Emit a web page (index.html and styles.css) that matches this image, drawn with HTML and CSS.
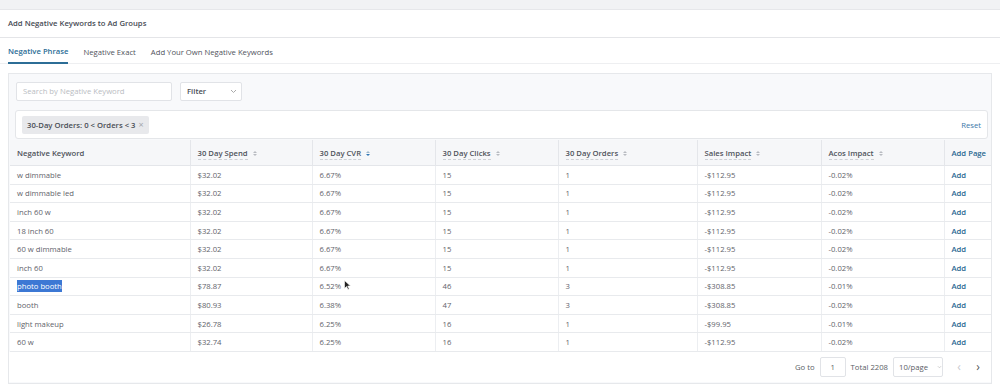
FILE: index.html
```html
<!DOCTYPE html>
<html lang="en">

<head>
    <meta charset="UTF-8">
    <title>Add Negative Keywords</title>
    <link rel="stylesheet" href="styles.css">
</head>

<body>
    <div class="topbar"></div>
    <div class="title">Add Negative Keywords to Ad Groups</div>
    <div class="tabs">
        <span class="tab active">Negative Phrase</span>
        <span class="tab">Negative Exact</span>
        <span class="tab">Add Your Own Negative Keywords</span>
    </div>

    <div class="panel">
        <div class="toolbar">
            <div class="search">Search by Negative Keyword</div>
            <div class="select">Filter
                <svg width="7" height="5" viewBox="0 0 7 5"><path d="M1 1l2.5 2.5L6 1" fill="none" stroke="#aaa" stroke-width="1"/></svg>
            </div>
        </div>
        <div class="chips">
            <span class="chip">30-Day Orders: 0 &lt; Orders &lt; 3 <span class="close">&times;</span></span>
            <span class="reset">Reset</span>
        </div>

        <table class="grid">
            <colgroup>
                <col style="width:180px">
                <col style="width:122px">
                <col style="width:123px">
                <col style="width:123px">
                <col style="width:139px">
                <col style="width:124px">
                <col style="width:123px">
                <col>
            </colgroup>
            <thead>
                <tr>
                    <th>Negative Keyword</th>
                    <th><span class="sort">30 Day Spend</span><i class="caret"><b></b><b></b></i></th>
                    <th><span class="sort">30 Day CVR</span><i class="caret down"><b></b><b></b></i></th>
                    <th><span class="sort">30 Day Clicks</span><i class="caret"><b></b><b></b></i></th>
                    <th><span class="sort">30 Day Orders</span><i class="caret"><b></b><b></b></i></th>
                    <th><span class="sort">Sales Impact</span><i class="caret"><b></b><b></b></i></th>
                    <th><span class="sort">Acos Impact</span><i class="caret"><b></b><b></b></i></th>
                    <th class="link">Add Page</th>
                </tr>
            </thead>
            <tbody>
                <tr><td>w dimmable</td><td>$32.02</td><td>6.67%</td><td>15</td><td>1</td><td>-$112.95</td><td>-0.02%</td><td class="link">Add</td></tr>
                <tr><td>w dimmable led</td><td>$32.02</td><td>6.67%</td><td>15</td><td>1</td><td>-$112.95</td><td>-0.02%</td><td class="link">Add</td></tr>
                <tr><td>inch 60 w</td><td>$32.02</td><td>6.67%</td><td>15</td><td>1</td><td>-$112.95</td><td>-0.02%</td><td class="link">Add</td></tr>
                <tr><td>18 inch 60</td><td>$32.02</td><td>6.67%</td><td>15</td><td>1</td><td>-$112.95</td><td>-0.02%</td><td class="link">Add</td></tr>
                <tr><td>60 w dimmable</td><td>$32.02</td><td>6.67%</td><td>15</td><td>1</td><td>-$112.95</td><td>-0.02%</td><td class="link">Add</td></tr>
                <tr><td>inch 60</td><td>$32.02</td><td>6.67%</td><td>15</td><td>1</td><td>-$112.95</td><td>-0.02%</td><td class="link">Add</td></tr>
                <tr><td><span class="selected">photo booth</span></td><td>$78.87</td><td class="has-cursor">6.52%<svg class="cursor" width="7" height="10" viewBox="0 0 7 10"><path d="M0.5 0.5v8l2-2 1.5 3 1.2-.6-1.5-2.9H6.5z" fill="#222" stroke="#fff" stroke-width="0.6"/></svg></td><td>46</td><td>3</td><td>-$308.85</td><td>-0.01%</td><td class="link">Add</td></tr>
                <tr><td>booth</td><td>$80.93</td><td>6.38%</td><td>47</td><td>3</td><td>-$308.85</td><td>-0.02%</td><td class="link">Add</td></tr>
                <tr><td>light makeup</td><td>$26.78</td><td>6.25%</td><td>16</td><td>1</td><td>-$99.95</td><td>-0.01%</td><td class="link">Add</td></tr>
                <tr><td>60 w</td><td>$32.74</td><td>6.25%</td><td>16</td><td>1</td><td>-$112.95</td><td>-0.02%</td><td class="link">Add</td></tr>
            </tbody>
        </table>

        <div class="pager">
            <span>Go to</span>
            <span class="box page-no">1</span>
            <span>Total 2208</span>
            <span class="box size">10/page
                <svg width="6" height="4" viewBox="0 0 6 4"><path d="M1 1l2 2 2-2" fill="none" stroke="#bbb" stroke-width="0.8"/></svg>
            </span>
            <span class="arrow muted">&#8249;</span>
            <span class="arrow">&#8250;</span>
        </div>
    </div>
</body>

</html>
```

FILE: styles.css
```css
body {
    margin: 0;
    background-color: #fff;
    font-family: "Open Sans", "Liberation Sans", sans-serif;
    font-size: 7.7px;
    color: #5a5e66;
}

.topbar {
    height: 9px;
    background-color: #f1f2f4;
    border-bottom: 1px solid #e6e7ea;
}

.title {
    height: 27px;
    line-height: 27px;
    padding-left: 8px;
    font-weight: 600;
    color: #484c55;
    border-bottom: 1px solid #e4e5e8;
}

.tabs {
    display: flex;
    gap: 15px;
    height: 25px;
    padding-left: 8px;
    border-bottom: 1px solid #eeeff1;
}

.tab {
    line-height: 29px;
    color: #50545c;
}

.tab.active {
    color: #2c6d96;
    font-weight: 600;
    border-bottom: 2px solid #2c6d96;
    margin-bottom: -1px;
    line-height: 27px;
}

.panel {
    margin: 9px 8px 0 8px;
    background-color: #f8f9fb;
    border: 1px solid #e6e8eb;
    height: 309px;
}

.toolbar {
    display: flex;
    gap: 8px;
    padding: 8px 7px 9px 7px;
}

.search,
.select {
    height: 17px;
    line-height: 17px;
    background-color: #fff;
    border: 1px solid #e1e3e7;
    border-radius: 2px;
}

.search {
    width: 148px;
    padding-left: 6px;
    color: #b9bcc2;
}

.select {
    width: 54px;
    padding: 0 0 0 6px;
    display: flex;
    align-items: center;
    gap: 24px;
    font-weight: 600;
    color: #4a4e56;
}

.chips {
    display: flex;
    align-items: center;
    justify-content: space-between;
    margin: 0 3px 1px 6px;
    height: 27px;
    padding: 0 6px 0 6px;
    background-color: #fff;
    border: 1px solid #e4e6e9;
    border-radius: 3px;
}

.chip {
    height: 18px;
    line-height: 18px;
    padding: 0 5px;
    background-color: #e8e9ec;
    border-radius: 2px;
    font-weight: 600;
    color: #4a4e56;
}

.chip .close {
    color: #a4a7ad;
    font-weight: 400;
    font-size: 9px;
    margin-left: 1px;
}

.reset {
    color: #3d78a8;
}

.grid {
    width: calc(100% - 1px);
    margin-left: 1px;
    border-collapse: collapse;
    table-layout: fixed;
    background-color: #fff;
}

.grid th {
    height: 25px;
    text-align: left;
    font-weight: 600;
    color: #4f535b;
    background-color: #f6f7f9;
    padding: 0 7px;
    border-left: 1px solid #e4e6ea;
    border-bottom: 1px solid #e4e6ea;
    white-space: nowrap;
}

.grid td {
    height: 17.6px;
    padding: 0 7px;
    color: #5f636b;
    border-left: 1px solid #eceef1;
    border-bottom: 1px solid #e8eaed;
    white-space: nowrap;
}

.grid th:first-child,
.grid td:first-child {
    border-left: none;
}

.grid .link {
    color: #2a6891;
    font-weight: 600;
}

.sort {
    border-bottom: 1px dashed #cdd0d5;
    padding-bottom: 1px;
}

.caret {
    display: inline-flex;
    flex-direction: column;
    gap: 1px;
    margin-left: 5px;
    vertical-align: middle;
}

.caret b {
    width: 0;
    height: 0;
    border-left: 2px solid transparent;
    border-right: 2px solid transparent;
}

.caret b:first-child {
    border-bottom: 2px solid #b8bbc1;
}

.caret b:last-child {
    border-top: 2px solid #b8bbc1;
}

.caret.down b:first-child {
    border-bottom-color: #9fb8cc;
}

.caret.down b:last-child {
    border-top-color: #2f77b5;
}

.selected {
    background-color: #3c78d4;
    color: #fff;
    padding: 1px 0;
}

.has-cursor {
    position: relative;
}

.cursor {
    position: absolute;
    left: 31px;
    top: 2px;
}

.pager {
    display: flex;
    align-items: center;
    justify-content: flex-end;
    gap: 5px;
    height: 30px;
    padding-right: 6px;
    background-color: #fff;
    color: #5a5e66;
}

.box {
    height: 18px;
    line-height: 18px;
    border: 1px solid #e1e3e7;
    border-radius: 2px;
}

.page-no {
    width: 24px;
    text-align: center;
}

.size {
    width: 43px;
    padding-left: 5px;
    display: flex;
    align-items: center;
    gap: 9px;
}

.arrow {
    width: 14px;
    text-align: center;
    font-size: 12px;
    color: #555;
}

.arrow.muted {
    color: #c8cacf;
    margin-left: 4px;
}
```
